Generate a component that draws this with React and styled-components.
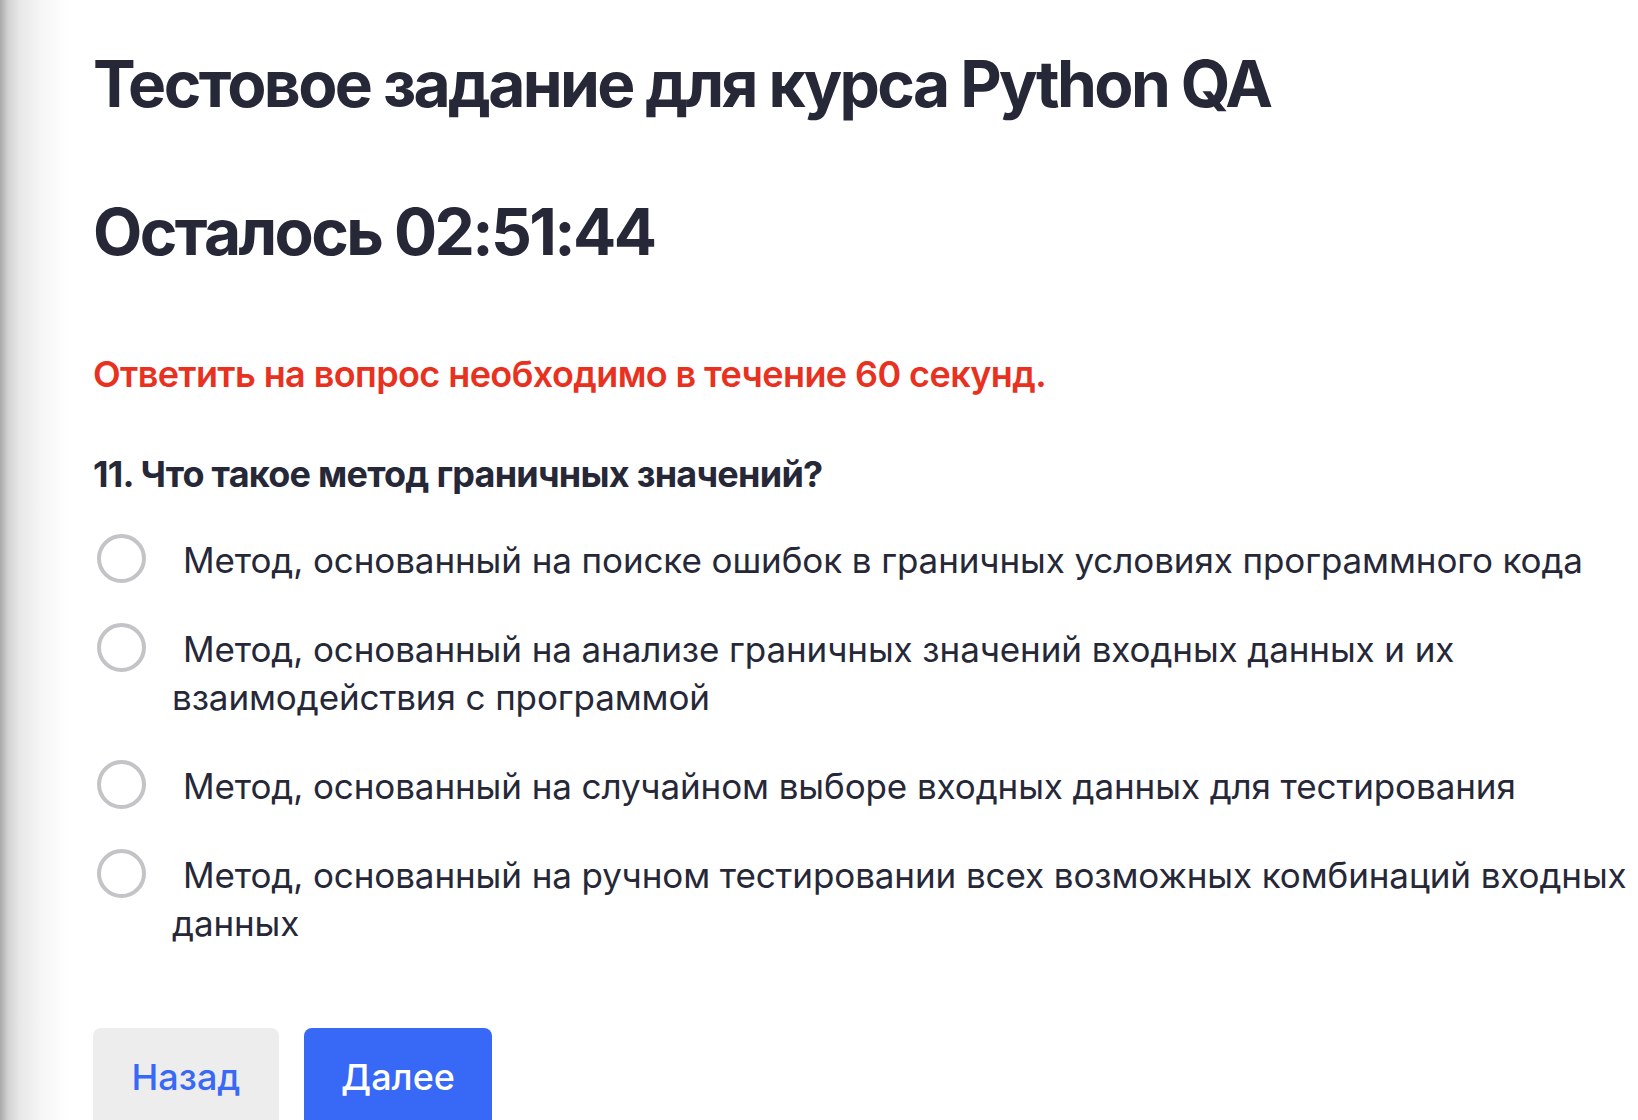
import React from 'react'
import styled, { createGlobalStyle } from 'styled-components'

const GlobalStyle = createGlobalStyle`
  html, body {
    margin: 0;
    padding: 0;
    background: #ffffff;
  }
  body {
    font-family: Inter, "Noto Sans", sans-serif;
    color: #262838;
  }
`

const Page = styled.div`
  height: 1120px;
  overflow: hidden;
  box-sizing: border-box;
  padding: 46px 0 0 93px;
  background: linear-gradient(
    to right,
    #a9a9a9 0px,
    #d2d2d2 8px,
    #e8e8e8 20px,
    #f5f5f5 40px,
    #fdfdfd 62px,
    #ffffff 75px
  );
`

const Title = styled.h1`
  margin: 0;
  font-size: 64px;
  line-height: 1.2;
  font-weight: 700;
  letter-spacing: -2.6px;
`

const Timer = styled(Title)`
  margin-top: 71px;
`

const Warning = styled.p`
  margin: 76px 0 0;
  font-size: 36px;
  line-height: 1.5;
  font-weight: 600;
  letter-spacing: -0.6px;
  color: #e8321f;
`

const Question = styled.h3`
  margin: 46px 0 0;
  font-size: 36px;
  line-height: 1.5;
  font-weight: 700;
  letter-spacing: -0.75px;
`

const Options = styled.div`
  display: flex;
  flex-direction: column;
  gap: 41px;
  margin-top: 35px;
`

const Option = styled.label`
  display: flex;
  align-items: flex-start;
  gap: 26px;
  cursor: pointer;
`

const Radio = styled.span`
  flex: none;
  box-sizing: border-box;
  width: 49px;
  height: 49px;
  margin: -2px 0 0 4px;
  border: 4.5px solid #c3c3c8;
  border-radius: 50%;
`

const OptionText = styled.span`
  font-size: 35px;
  line-height: 48px;
  font-weight: 400;
  letter-spacing: -0.1px;
  text-indent: 11px;
`

const Buttons = styled.div`
  display: flex;
  gap: 25px;
  margin-top: 81px;
`

const Button = styled.button`
  box-sizing: border-box;
  width: ${(props) => props.width}px;
  height: 110px;
  padding: 0 0 12px;
  border: none;
  border-radius: 8px;
  font-family: Inter, sans-serif;
  font-size: 36px;
  font-weight: 500;
  background: ${(props) => (props.primary ? '#3868f6' : '#ededed')};
  color: ${(props) => (props.primary ? '#ffffff' : '#3868f6')};
  cursor: pointer;
`

const answers = [
  'Метод, основанный на поиске ошибок в граничных условиях программного кода',
  'Метод, основанный на анализе граничных значений входных данных и их взаимодействия с программой',
  'Метод, основанный на случайном выборе входных данных для тестирования',
  'Метод, основанный на ручном тестировании всех возможных комбинаций входных данных',
]

export default function App() {
  return (
    <>
      <GlobalStyle />
      <Page>
        <Title>Тестовое задание для курса Python QA</Title>
        <Timer>Осталось 02:51:44</Timer>
        <Warning>Ответить на вопрос необходимо в течение 60 секунд.</Warning>
        <Question>11. Что такое метод граничных значений?</Question>
        <Options>
          {answers.map((a) => (
            <Option key={a}>
              <Radio />
              <OptionText>{a}</OptionText>
            </Option>
          ))}
        </Options>
        <Buttons>
          <Button width={186}>Назад</Button>
          <Button width={188} primary>Далее</Button>
        </Buttons>
      </Page>
    </>
  )
}
